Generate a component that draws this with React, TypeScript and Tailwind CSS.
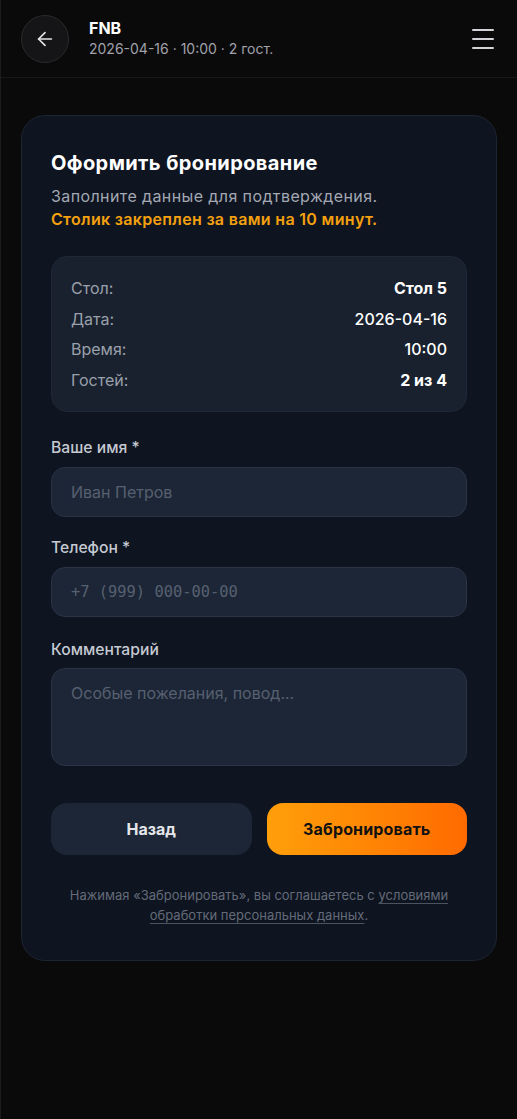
import { useState } from 'react';

const font = { fontFamily: 'Inter, "Noto Sans", sans-serif' };

export default function App() {
  const [name, setName] = useState('');
  const [phone, setPhone] = useState('');
  const [comment, setComment] = useState('');

  const summary = [
    { label: 'Стол:', value: 'Стол 5', bold: true },
    { label: 'Дата:', value: '2026-04-16', bold: false },
    { label: 'Время:', value: '10:00', bold: false },
    { label: 'Гостей:', value: '2 из 4', bold: true },
  ];

  return (
    <div className="min-h-[1119px] bg-[#0a0a0b] border-l border-[#1c1c1f] text-white" style={font}>
      <header className="h-[78px] flex items-center px-5 border-b border-[#18181b]">
        <button className="w-12 h-12 rounded-full bg-[#151517] border border-[#2a2a2d] flex items-center justify-center text-[#e4e4e7]">
          <svg width="22" height="22" viewBox="0 0 24 24" fill="none" stroke="currentColor" strokeWidth="1.8" strokeLinecap="round" strokeLinejoin="round">
            <path d="M19 12H5" />
            <path d="M12 19l-7-7 7-7" />
          </svg>
        </button>
        <div className="ml-5 flex-1">
          <div className="text-[16px] font-bold leading-5">FNB</div>
          <div className="text-[14px] text-[#a1a1aa] leading-5 mt-[1px]">2026-04-16 · 10:00 · 2 гост.</div>
        </div>
        <button className="w-6 h-6 flex flex-col justify-center gap-[7px] mr-[1px]">
          <span className="block h-[2px] w-[22px] bg-[#d4d4d8] rounded" />
          <span className="block h-[2px] w-[22px] bg-[#d4d4d8] rounded" />
          <span className="block h-[2px] w-[22px] bg-[#d4d4d8] rounded" />
        </button>
      </header>

      <main className="px-5 pt-[37px]">
        <div className="rounded-[24px] bg-[#0e1420] border border-[#1d2432] px-[29px] pt-[33px] pb-[35px]">
          <h1 className="text-[20px] font-bold leading-7 tracking-[0.02em]">Оформить бронирование</h1>
          <p className="mt-[8px] text-[16px] text-[#a3a8b3] leading-[23px] tracking-[0.025em]">Заполните данные для подтверждения.</p>
          <p className="text-[16px] font-semibold text-[#f5a10f] leading-[23px] tracking-[0.02em]">Столик закреплен за вами на 10 минут.</p>

          <div className="mt-[25px] rounded-[16px] bg-[#19212e] border border-[#1f2836] px-[19px] py-[20px] flex flex-col gap-[8px]">
            {summary.map((r) => (
              <div key={r.label} className="flex justify-between text-[16px] leading-[22.5px]">
                <span className="text-[#9aa0ab]">{r.label}</span>
                <span className={r.bold ? 'font-bold text-white' : 'font-medium text-white'}>{r.value}</span>
              </div>
            ))}
          </div>

          <label className="block mt-[26px] text-[15.7px] text-[#c5c9d1] font-medium leading-5">Ваше имя *</label>
          <input
            value={name}
            onChange={(e) => setName(e.target.value)}
            placeholder="Иван Петров"
            className="mt-[9px] w-full h-[50px] rounded-[14px] bg-[#1d2636] border border-[#2b3444] px-[19px] text-[16px] text-white placeholder-[#566070] outline-none"
          />

          <label className="block mt-[21px] text-[15.7px] text-[#c5c9d1] font-medium leading-5">Телефон *</label>
          <input
            value={phone}
            onChange={(e) => setPhone(e.target.value)}
            placeholder="+7 (999) 000-00-00"
            className="mt-[9px] w-full h-[50px] rounded-[14px] bg-[#1d2636] border border-[#2b3444] px-[19px] text-[15.4px] text-white placeholder-[#566070] outline-none"
            style={{ fontFamily: '"DejaVu Sans Mono", "Liberation Mono", monospace' }}
          />

          <label className="block mt-[23px] text-[15.7px] text-[#c5c9d1] font-medium leading-5">Комментарий</label>
          <textarea
            value={comment}
            onChange={(e) => setComment(e.target.value)}
            placeholder="Особые пожелания, повод..."
            className="mt-[8px] block w-full h-[98px] resize-none rounded-[14px] bg-[#1d2636] border border-[#2b3444] px-[19px] py-[14px] text-[16px] leading-5 text-white placeholder-[#566070] outline-none"
            style={font}
          />

          <div className="mt-[37px] grid grid-cols-2 gap-[15px]">
            <button className="h-[52px] rounded-[16px] bg-[#1c2636] text-[16px] font-bold text-[#e4e6ea]">Назад</button>
            <button className="h-[52px] rounded-[16px] bg-gradient-to-r from-[#ff9f0a] to-[#ff6a00] text-[16px] font-bold text-[#111111] tracking-[0.01em]">Забронировать</button>
          </div>

          <p className="mt-[30px] text-center text-[13px] leading-[20px] text-[#646b78] px-2">
            Нажимая «Забронировать», вы соглашаетесь с{' '}
            <a className="underline underline-offset-[3px] decoration-[#4b5361]">условиями обработки персональных данных</a>.
          </p>
        </div>
      </main>
    </div>
  );
}
